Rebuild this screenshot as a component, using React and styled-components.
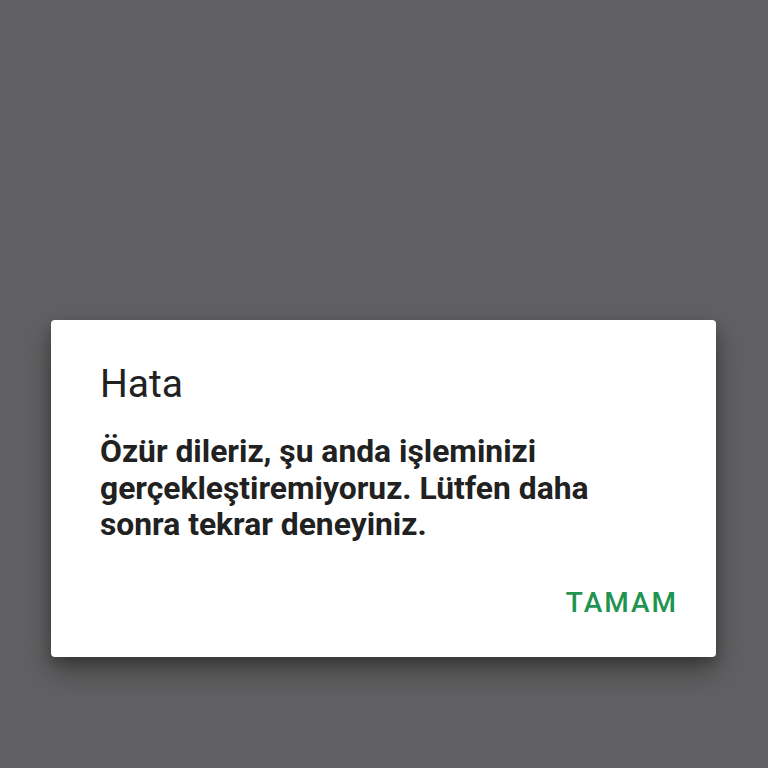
import React from "react";
import styled, { createGlobalStyle } from "styled-components";

const GlobalStyle = createGlobalStyle`
  html, body {
    margin: 0;
    padding: 0;
    background: #616163;
    font-family: Roboto, "Noto Sans", "Liberation Sans", sans-serif;
  }
`;

const Screen = styled.div`
  width: 768px;
  height: 768px;
  box-sizing: border-box;
  padding-top: 320px;
  background: #616163;
  overflow: hidden;
`;

const Dialog = styled.div`
  margin: 0 52px 0 51px;
  background: #ffffff;
  border-radius: 4px;
  padding: 42px 0 36px 49px;
  box-shadow: 0 14px 30px rgba(0, 0, 0, 0.35), 0 6px 12px rgba(0, 0, 0, 0.2);
`;

const Title = styled.div`
  font-size: 39px;
  line-height: 44px;
  font-weight: 400;
  color: #212121;
`;

const Message = styled.div`
  margin-top: 27px;
  font-size: 31.8px;
  line-height: 36.7px;
  font-weight: 700;
  color: #212121;
  padding-right: 80px;
`;

const Actions = styled.div`
  display: flex;
  justify-content: flex-end;
  margin-top: 42px;
  padding-right: 40px;
`;

const TextButton = styled.button`
  border: none;
  background: none;
  padding: 0;
  font-family: inherit;
  font-size: 28px;
  line-height: 36px;
  font-weight: 500;
  letter-spacing: 2px;
  margin-right: -2px;
  color: #1e9450;
  cursor: pointer;
`;

export default function App() {
  return (
    <>
      <GlobalStyle />
      <Screen>
        <Dialog>
          <Title>Hata</Title>
          <Message>
            Özür dileriz, şu anda işleminizi gerçekleştiremiyoruz. Lütfen daha
            sonra tekrar deneyiniz.
          </Message>
          <Actions>
            <TextButton>TAMAM</TextButton>
          </Actions>
        </Dialog>
      </Screen>
    </>
  );
}
